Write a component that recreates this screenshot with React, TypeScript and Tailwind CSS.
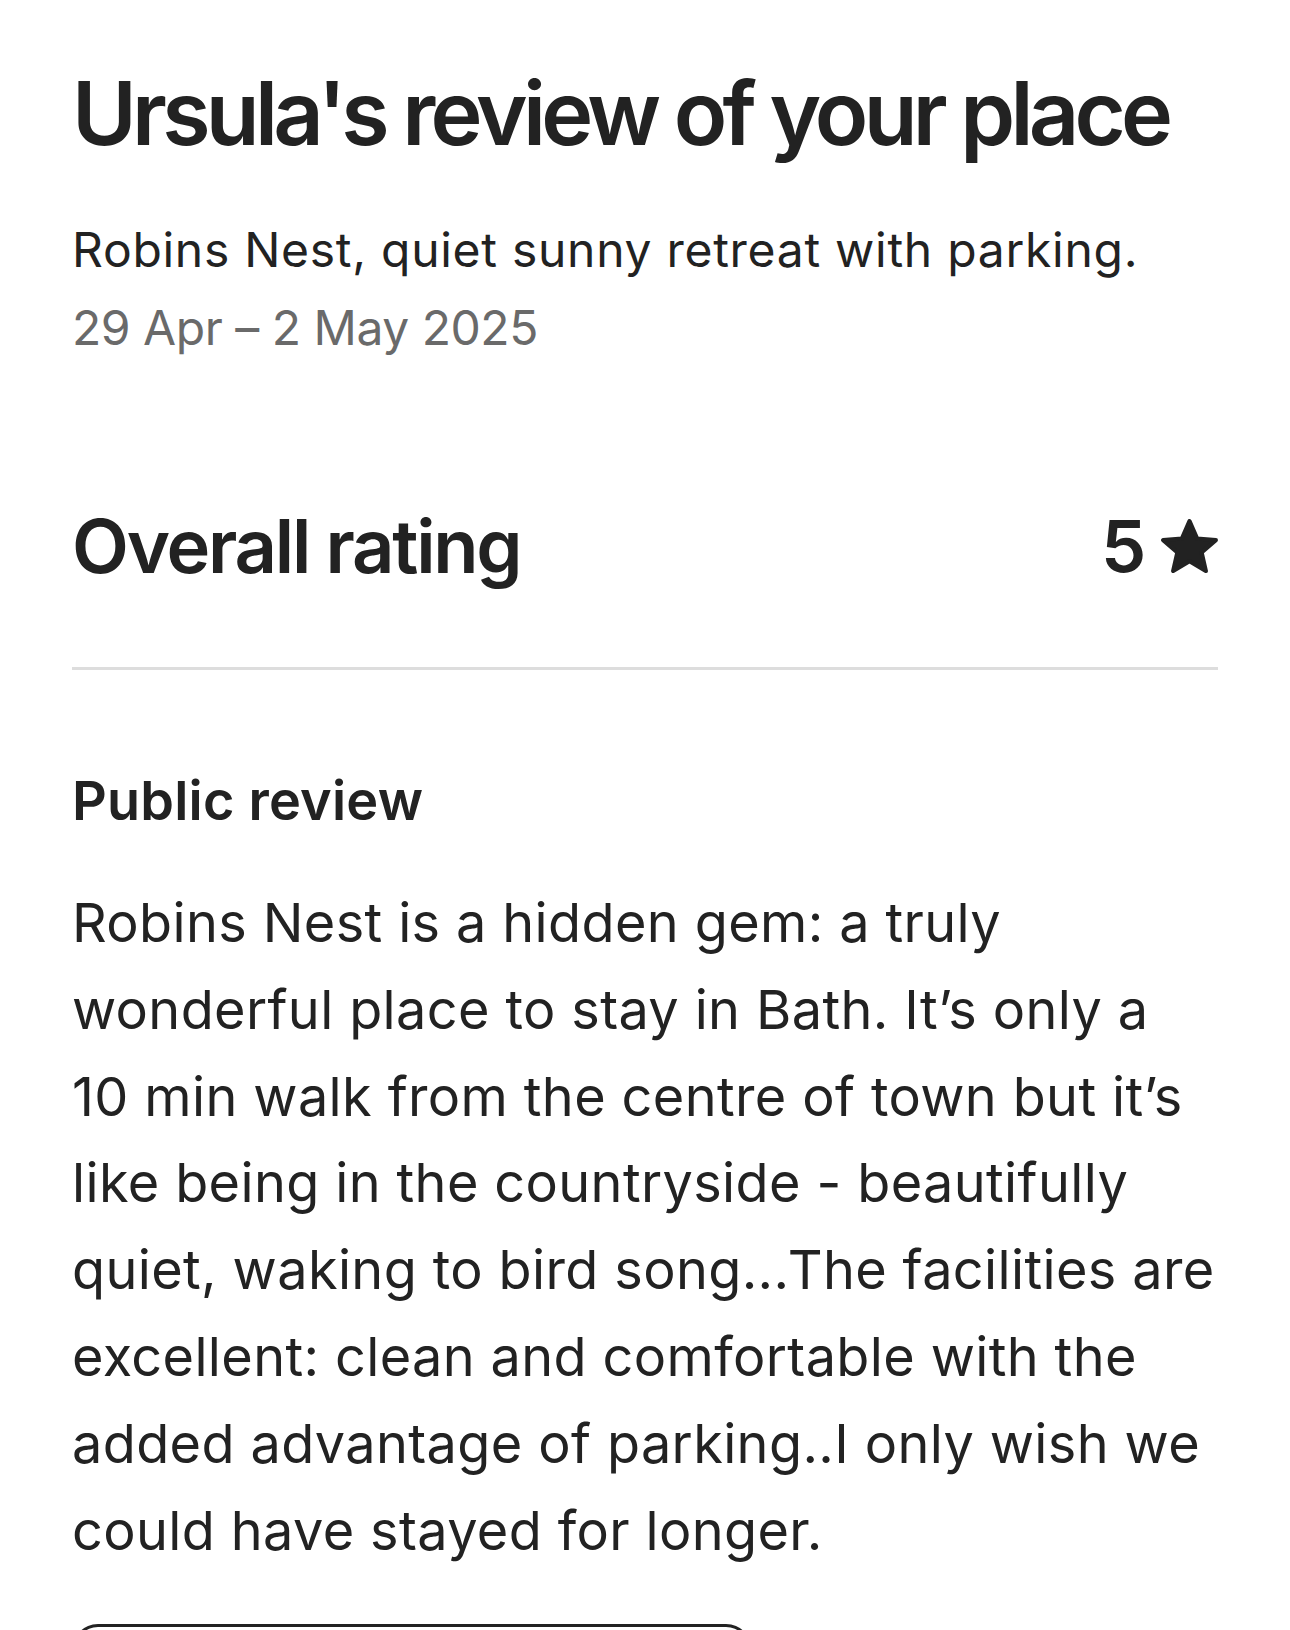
import React from "react";

function Star() {
  return (
    <svg width="57" height="54" viewBox="1.2 0.8 21.6 20.5" className="block" aria-hidden="true">
      <path
        d="M12 1.6l2.9 6.6 7.1.6-5.4 4.7 1.6 7-6.2-3.7-6.2 3.7 1.6-7L2 8.8l7.1-.6z"
        fill="#222222"
        stroke="#222222"
        strokeWidth="1.6"
        strokeLinejoin="round"
      />
    </svg>
  );
}

const lines = [
  "Robins Nest is a hidden gem: a truly",
  "wonderful place to stay in Bath. It’s only a",
  "10 min walk from the centre of town but it’s",
  "like being in the countryside - beautifully",
  "quiet, waking to bird song...The facilities are",
  "excellent: clean and comfortable with the",
  "added advantage of parking..I only wish we",
  "could have stayed for longer.",
];

export default function App() {
  const font = { fontFamily: "Inter, 'Noto Sans', sans-serif" };
  return (
    <div className="min-h-screen bg-white text-[#222222]" style={font}>
      <div className="px-[72px] pt-[65px]">
        <h1 className="text-[88px] leading-[96px] font-semibold tracking-[-0.054em] whitespace-nowrap">
          Ursula's review of your place
        </h1>
        <div className="mt-[50px]">
          <p className="text-[48px] leading-[78px] tracking-[0.015em] whitespace-nowrap">
            Robins Nest, quiet sunny retreat with parking.
          </p>
          <p className="text-[48px] leading-[78px] tracking-[-0.01em] text-[#6a6a6a]">
            29 Apr – 2 May 2025
          </p>
        </div>
        <div className="mt-[135px] flex items-center justify-between">
          <h2 className="text-[74px] leading-[88px] font-semibold tracking-[-0.03em]">
            Overall rating
          </h2>
          <div className="flex items-center gap-[17px]">
            <span className="text-[72px] leading-[88px] font-semibold tracking-[-0.03em]">5</span>
            <Star />
          </div>
        </div>
        <div className="mt-[77px] h-[3px] bg-[#dddddd]" />
        <h3 className="mt-[99px] text-[54px] leading-[64px] font-semibold tracking-[0.004em]">
          Public review
        </h3>
        <div className="mt-[47px] text-[54px] leading-[86.8px] tracking-[0.007em]">
          {lines.map((l) => (
            <div key={l} className="whitespace-nowrap">
              {l}
            </div>
          ))}
        </div>
        <button className="mt-[50px] w-[680px] h-[110px] rounded-[26px] border-[3px] border-[#222222] text-[48px] font-semibold">
          Respond publicly
        </button>
      </div>
    </div>
  );
}
